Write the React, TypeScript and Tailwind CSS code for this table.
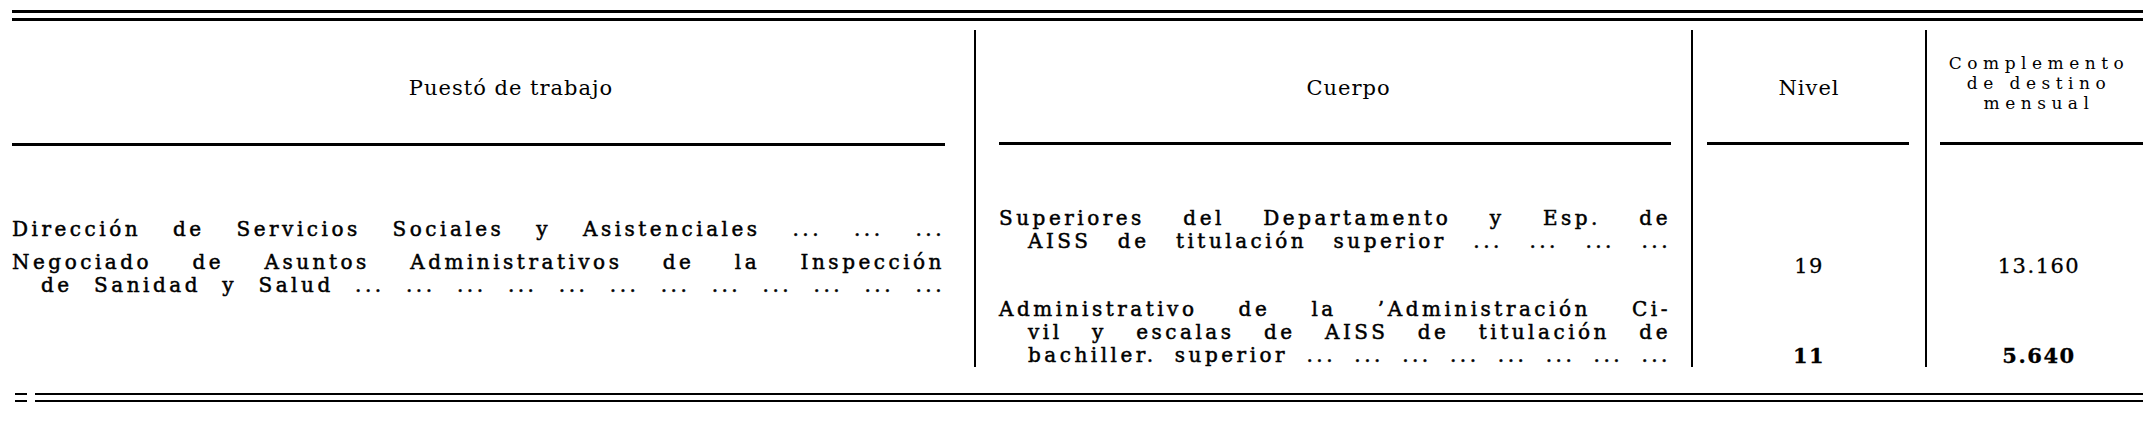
import React from 'react';

const dots = (n: number) => Array.from({ length: n }, () => '...').join(' ');

const Line: React.FC<{ indent?: boolean; className?: string; children: React.ReactNode }> = ({
  indent,
  className = '',
  children,
}) => (
  <div className={`text-justify [text-align-last:justify] ${indent ? 'pl-[29px]' : ''} ${className}`}>
    {children}
  </div>
);

const HeaderCell: React.FC<{ className?: string; children: React.ReactNode }> = ({ className = '', children }) => (
  <div
    className={`flex h-[113px] items-center justify-center pt-[3px] text-[21px] leading-[24px] tracking-[1px] ${className}`}
  >
    {children}
  </div>
);

const App: React.FC = () => {
  return (
    <div className="h-[424px] w-[2150px] overflow-hidden bg-white pl-[12px] pr-[7px] pt-[10px] font-['DejaVu_Serif',serif] text-black">
      {/* Double rule on top */}
      <div className="h-[3px] bg-black" />
      <div className="mt-[5px] h-[3px] bg-black" />

      <div className="mt-[9px] flex h-[337px]">
        {/* Puesto de trabajo */}
        <div className="flex w-[962px] flex-col">
          <HeaderCell className="pl-[36px]">Puestó de trabajo</HeaderCell>
          <div className="mr-[29px] h-[3px] bg-black" />
          <div className="mr-[29px] mt-[72px] text-[20px] leading-[23px] tracking-[3.5px] [-webkit-text-stroke:0.5px_black]">
            <Line>Dirección de Servicios Sociales y Asistenciales {dots(3)}</Line>
            <Line className="mt-[10px]">Negociado de Asuntos Administrativos de la Inspección</Line>
            <Line indent>de Sanidad y Salud {dots(12)}</Line>
          </div>
        </div>

        {/* Cuerpo */}
        <div className="flex w-[717px] flex-col border-l-2 border-black">
          <HeaderCell className="pl-[30px]">Cuerpo</HeaderCell>
          <div className="ml-[23px] mr-[20px] h-[3px] bg-black" />
          <div className="ml-[23px] mr-[20px] mt-[62px] text-[20px] leading-[23px] tracking-[3.5px] [-webkit-text-stroke:0.5px_black]">
            <Line>Superiores del Departamento y Esp. de</Line>
            <Line indent>AISS de titulación superior {dots(4)}</Line>
            <Line className="mt-[45px]">Administrativo de la ’Administración Ci-</Line>
            <Line indent>vil y escalas de AISS de titulación de</Line>
            <Line indent>bachiller. superior {dots(8)}</Line>
          </div>
        </div>

        {/* Nivel */}
        <div className="flex w-[234px] flex-col border-l-2 border-black">
          <HeaderCell>Nivel</HeaderCell>
          <div className="ml-[14px] mr-[16px] h-[3px] bg-black" />
          <div className="flex flex-col items-center text-[21px] leading-[23px] tracking-[1.5px] [-webkit-text-stroke:0.3px_black]">
            <div className="mt-[110px]">19</div>
            <div className="mt-[66px] font-bold">11</div>
          </div>
        </div>

        {/* Complemento de destino mensual */}
        <div className="flex flex-1 flex-col border-l-2 border-black">
          <div className="flex h-[113px] flex-col items-center justify-center pb-[7px] pl-[8px] text-[17px] leading-[20px] tracking-[5.5px]">
            <span>Complemento</span>
            <span>de destino</span>
            <span>mensual</span>
          </div>
          <div className="ml-[13px] h-[3px] bg-black" />
          <div className="flex flex-col items-center pl-[8px] text-[21px] leading-[23px] tracking-[1.5px] [-webkit-text-stroke:0.3px_black]">
            <div className="mt-[110px]">13.160</div>
            <div className="mt-[66px] font-bold">5.640</div>
          </div>
        </div>
      </div>

      {/* Double rule at the bottom */}
      <div className="mt-[26px] flex h-[2px] gap-[8px] pl-[3px]">
        <div className="w-[12px] bg-black" />
        <div className="flex-1 bg-black" />
      </div>
      <div className="mt-[5px] flex h-[2px] gap-[8px] pl-[3px]">
        <div className="w-[12px] bg-black" />
        <div className="flex-1 bg-black" />
      </div>
    </div>
  );
};

export default App;
